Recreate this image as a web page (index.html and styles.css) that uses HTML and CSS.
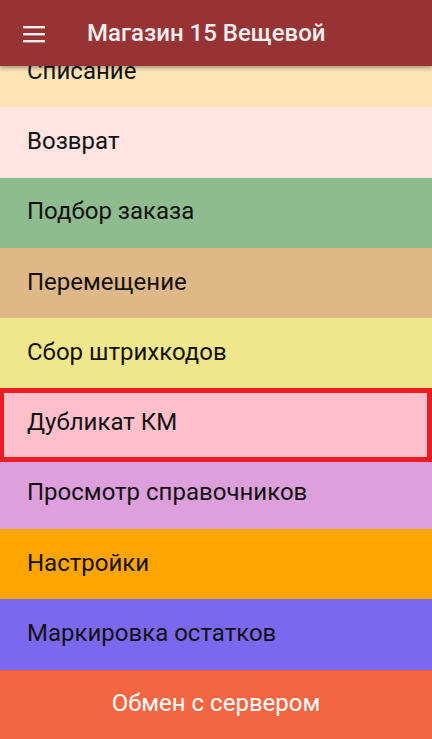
FILE: index.html
```html
<!DOCTYPE html>
<html lang="ru">
<head>
<meta charset="utf-8">
<title>Магазин 15 Вещевой</title>
<link rel="stylesheet" href="styles.css">
</head>
<body>
<div class="screen">
  <header class="toolbar">
    <button class="menu-btn" aria-label="Меню">
      <svg width="22" height="18" viewBox="0 0 22 18">
        <rect x="0" y="1" width="22" height="2.4" fill="#f0eeee"/>
        <rect x="0" y="8" width="22" height="2.4" fill="#f0eeee"/>
        <rect x="0" y="15" width="22" height="2.4" fill="#f0eeee"/>
      </svg>
    </button>
    <h1 class="title">Магазин 15 Вещевой</h1>
  </header>
  <main class="list">
    <div class="list-inner">
      <div class="row c-moccasin">Списание</div>
      <div class="row c-rose">Возврат</div>
      <div class="row c-green">Подбор заказа</div>
      <div class="row c-wood">Перемещение</div>
      <div class="row c-khaki">Сбор штрихкодов</div>
      <div class="row c-pink row-marked">Дубликат КМ<span class="mark"></span></div>
      <div class="row c-plum">Просмотр справочников</div>
      <div class="row c-orange">Настройки</div>
      <div class="row c-slate">Маркировка остатков</div>
    </div>
  </main>
  <footer class="exchange">Обмен с сервером</footer>
</div>
</body>
</html>
```
FILE: styles.css
```css
html, body {
  margin: 0;
  padding: 0;
}
body {
  width: 432px;
  height: 739px;
  overflow: hidden;
  font-family: Roboto, "Noto Sans", "Liberation Sans", sans-serif;
  background: #fff;
}
.screen {
  display: flex;
  flex-direction: column;
  height: 739px;
}
.toolbar {
  flex: 0 0 66px;
  height: 66px;
  display: flex;
  align-items: center;
  background: #983335;
  box-shadow: 0 2px 4px rgba(0, 0, 0, 0.35);
  position: relative;
  z-index: 2;
}
.menu-btn {
  margin: 1px 0 0 23px;
  padding: 0;
  border: 0;
  background: transparent;
  display: flex;
  width: 22px;
  height: 18px;
}
.title {
  margin: 0 0 0 42px;
  font-size: 24px;
  font-weight: 500;
  color: #eeeeee;
  padding-bottom: 1px;
}
.list {
  flex: 1 1 auto;
  overflow: hidden;
}
.list-inner {
  margin-top: -29px;
}
.row {
  height: 70.3px;
  box-sizing: border-box;
  display: flex;
  align-items: center;
  padding: 0 0 3px 27px;
  font-size: 24px;
  color: #121212;
  position: relative;
}
.row-marked {
  z-index: 1;
}
.mark {
  position: absolute;
  left: 0;
  right: 0;
  top: 0;
  bottom: -3px;
  border: 5px solid #ed1c24;
  border-left-width: 4px;
}
.c-moccasin { background: #ffe4b5; }
.c-rose { background: #ffe4e1; }
.c-green { background: #8fbc8f; }
.c-wood { background: #deb887; }
.c-khaki { background: #f0e68c; }
.c-pink { background: #ffc0cb; }
.c-plum { background: #dda0dd; }
.c-orange { background: #ffa500; }
.c-slate { background: #7b68ee; }
.exchange {
  flex: 0 0 69.3px;
  display: flex;
  align-items: center;
  justify-content: center;
  background: #f46642;
  color: #ffffff;
  font-size: 24px;
  padding-bottom: 3px;
  box-sizing: border-box;
}
```
